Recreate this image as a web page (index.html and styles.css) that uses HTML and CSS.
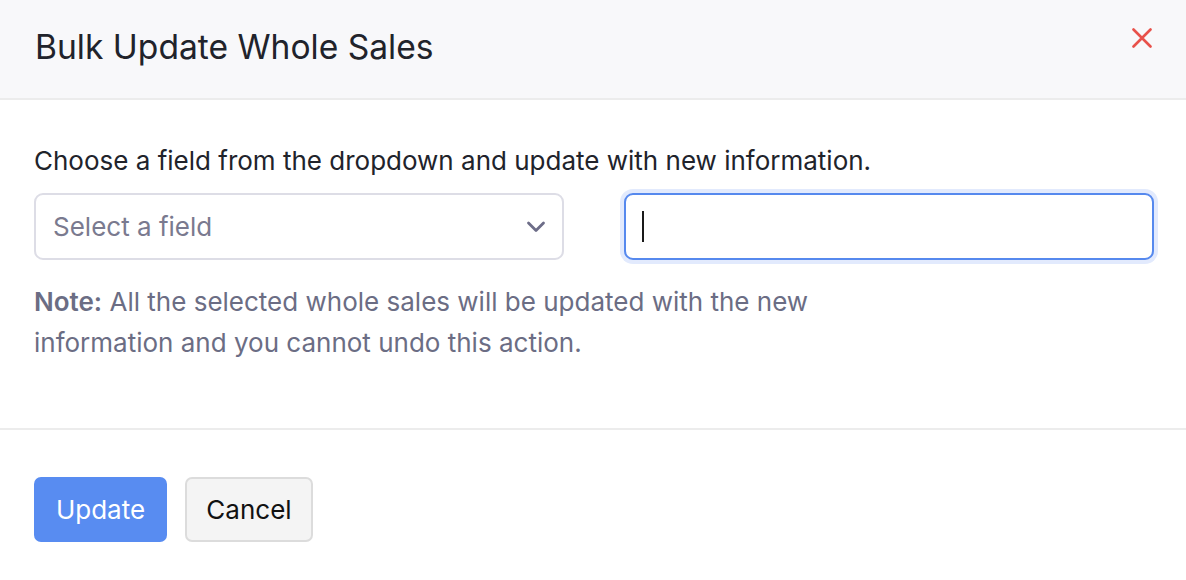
FILE: index.html
```html
<!DOCTYPE html>
<html lang="en">
<head>
<meta charset="utf-8">
<title>Bulk Update Whole Sales</title>
<link rel="stylesheet" href="styles.css">
</head>
<body>
<div class="modal">
  <header class="modal-header">
    <h1 class="modal-title">Bulk Update Whole Sales</h1>
    <button class="close-btn" aria-label="Close">
      <svg width="20" height="20" viewBox="0 0 20 20"><path d="M1.5 1.5 L18.5 18.5 M18.5 1.5 L1.5 18.5" stroke="#e8514a" stroke-width="2.6" stroke-linecap="round" fill="none"/></svg>
    </button>
  </header>
  <section class="modal-body">
    <p class="intro">Choose a field from the dropdown and update with new information.</p>
    <div class="fields">
      <div class="select">
        <span class="placeholder">Select a field</span>
        <svg class="chevron" width="20" height="12" viewBox="0 0 20 12"><path d="M2.5 2 L10 9.5 L17.5 2" stroke="#6d6d88" stroke-width="2.8" stroke-linecap="round" stroke-linejoin="round" fill="none"/></svg>
      </div>
      <div class="input focused"><span class="caret"></span></div>
    </div>
    <p class="note"><strong>Note:</strong> All the selected whole sales will be updated with the new<br>information and you cannot undo this action.</p>
  </section>
  <footer class="modal-footer">
    <button class="btn btn-primary">Update</button>
    <button class="btn btn-secondary">Cancel</button>
  </footer>
</div>
</body>
</html>
```

FILE: styles.css
```css
* { box-sizing: border-box; }
html, body { margin: 0; padding: 0; background: #fff; }
body { font-family: Inter, "Noto Sans", sans-serif; color: #21263c; }

.modal { width: 1186px; height: 580px; background: #fff; }

.modal-header {
  height: 100px;
  background: #f8f8fa;
  border-bottom: 2px solid #ececec;
  display: flex;
  align-items: flex-start;
  justify-content: space-between;
  padding: 0 34px 0 35px;
}
.modal-title {
  margin: 0;
  padding-top: 27px;
  font-size: 33.6px;
  line-height: 40px;
  font-weight: 400;
  color: #21232b;
}
.close-btn {
  border: 0; background: transparent; padding: 0; width: 20px; height: 20px;
  display: flex; margin-top: 28px;
}

.modal-body {
  padding: 44px 32px 0 34px;
  height: 330px;
  border-bottom: 2px solid #ececec;
}
.intro {
  margin: 0;
  font-size: 26px;
  line-height: 34px;
  color: #21232b;
}
.fields {
  display: grid;
  grid-template-columns: 530px 530px;
  column-gap: 60px;
  margin-top: 15px;
}
.select, .input {
  height: 67px;
  border-radius: 9px;
  background: #fff;
  display: flex;
  align-items: center;
}
.select {
  border: 2px solid #dddde6;
  padding: 0 16px 0 17px;
  justify-content: space-between;
}
.placeholder { font-size: 26px; color: #7a7a8f; }
.input.focused {
  border: 2px solid #5689ee;
  box-shadow: 0 0 0 4px #e2eafd;
  padding-left: 16px;
}
.caret { width: 2px; height: 31px; background: #1a1a1a; }

.note {
  margin: 21px 0 0;
  font-size: 26px;
  line-height: 41px;
  color: #6b6d84;
}
.note strong { font-weight: 600; color: #6b6d84; }

.modal-footer {
  display: flex;
  gap: 18px;
  padding: 47px 34px;
}
.btn {
  height: 65px;
  border-radius: 7px;
  font-family: Inter, "Noto Sans", sans-serif;
  font-size: 26px;
  padding: 0;
  cursor: pointer;
}
.btn-primary { background: #588cf1; color: #fff; border: 0; width: 133px; }
.btn-secondary { background: #f4f4f4; color: #111; border: 2px solid #dcdcdc; width: 128px; }
```
